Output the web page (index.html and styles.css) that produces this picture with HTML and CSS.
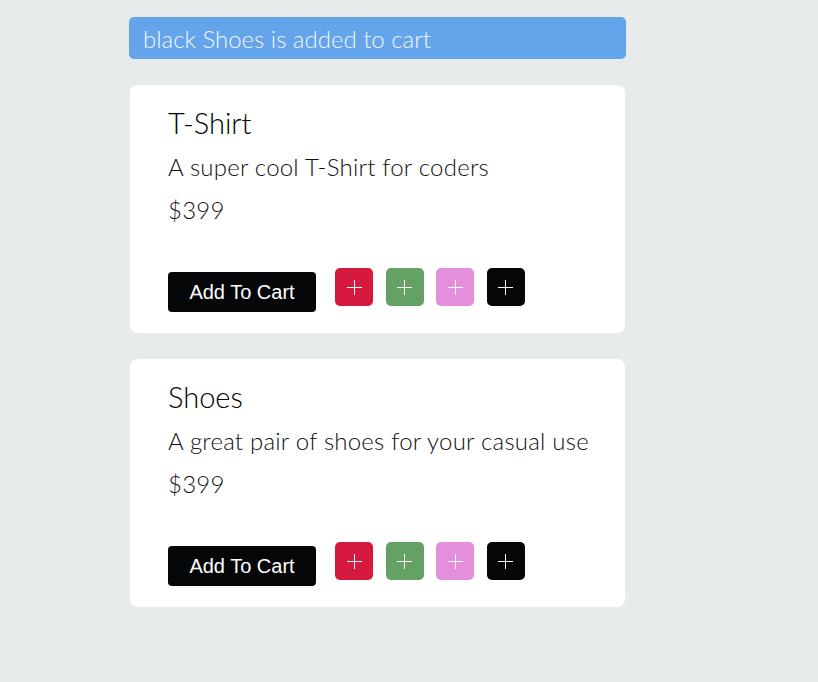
FILE: index.html
```html
<!DOCTYPE html>
<html>
<head>
<meta charset="utf-8">
<link rel="stylesheet" href="styles.css">
</head>
<body>
<div class="wrap">
  <div class="alert">black Shoes is added to cart</div>
  <div class="card">
    <h2 class="title">T-Shirt</h2>
    <p class="desc">A super cool T-Shirt for coders</p>
    <p class="price">$399</p>
    <div class="actions">
      <button class="cart">Add To Cart</button>
      <div class="swatches">
        <button class="sw red"><svg viewBox="0 0 15 15" width="15" height="15"><path d="M7.5 0V15M0 7.5H15" stroke="#fff" stroke-width="1"/></svg></button>
        <button class="sw green"><svg viewBox="0 0 15 15" width="15" height="15"><path d="M7.5 0V15M0 7.5H15" stroke="#fff" stroke-width="1"/></svg></button>
        <button class="sw pink"><svg viewBox="0 0 15 15" width="15" height="15"><path d="M7.5 0V15M0 7.5H15" stroke="#fff" stroke-width="1"/></svg></button>
        <button class="sw black"><svg viewBox="0 0 15 15" width="15" height="15"><path d="M7.5 0V15M0 7.5H15" stroke="#fff" stroke-width="1"/></svg></button>
      </div>
    </div>
  </div>
  <div class="card">
    <h2 class="title">Shoes</h2>
    <p class="desc">A great pair of shoes for your casual use</p>
    <p class="price">$399</p>
    <div class="actions">
      <button class="cart">Add To Cart</button>
      <div class="swatches">
        <button class="sw red"><svg viewBox="0 0 15 15" width="15" height="15"><path d="M7.5 0V15M0 7.5H15" stroke="#fff" stroke-width="1"/></svg></button>
        <button class="sw green"><svg viewBox="0 0 15 15" width="15" height="15"><path d="M7.5 0V15M0 7.5H15" stroke="#fff" stroke-width="1"/></svg></button>
        <button class="sw pink"><svg viewBox="0 0 15 15" width="15" height="15"><path d="M7.5 0V15M0 7.5H15" stroke="#fff" stroke-width="1"/></svg></button>
        <button class="sw black"><svg viewBox="0 0 15 15" width="15" height="15"><path d="M7.5 0V15M0 7.5H15" stroke="#fff" stroke-width="1"/></svg></button>
      </div>
    </div>
  </div>
</div>
</body>
</html>
```
FILE: styles.css
```css
html, body {
  margin: 0;
  padding: 0;
  background: #e8ebeb;
}
body {
  font-family: Lato, "Liberation Sans", sans-serif;
}
.wrap {
  width: 497px;
  margin-left: 129px;
  padding-top: 17px;
  display: flex;
  flex-direction: column;
  gap: 26px;
}
.alert {
  background: #63a4ea;
  color: #f4f6f8;
  border-radius: 5px;
  height: 42px;
  box-sizing: border-box;
  padding: 0 14px;
  display: flex;
  align-items: center;
  font-size: 24px;
  font-weight: 300;
}
.card {
  background: #fff;
  border-radius: 8px;
  margin-left: 1px;
  width: 495px;
  box-sizing: border-box;
  padding: 20px 38px 21px;
  display: flex;
  flex-direction: column;
}
.title {
  margin: 0;
  font-size: 29px;
  font-weight: 300;
  line-height: 36px;
  color: #000;
}
.desc, .price {
  margin: 15px 0 0;
  font-size: 24px;
  font-weight: 300;
  line-height: 28px;
  letter-spacing: 0.22px;
  color: #111;
  white-space: nowrap;
}
.desc {
  margin-top: 12px;
}
.actions {
  margin-top: 44px;
  display: flex;
  align-items: flex-start;
  gap: 19px;
}
.cart {
  margin-top: 4px;
  width: 148px;
  height: 40px;
  border: none;
  border-radius: 4px;
  background: #050608;
  color: #fff;
  font-family: "Liberation Sans", Arial, sans-serif;
  font-size: 20px;
  padding: 0;
}
.swatches {
  display: flex;
  gap: 12.5px;
}
.sw {
  width: 38px;
  height: 38px;
  border: none;
  border-radius: 5px;
  padding: 0;
  display: flex;
  align-items: center;
  justify-content: center;
}
.red { background: #d6193f; }
.green { background: #64a264; }
.pink { background: #e38fdc; }
.black { background: #050608; }
```
